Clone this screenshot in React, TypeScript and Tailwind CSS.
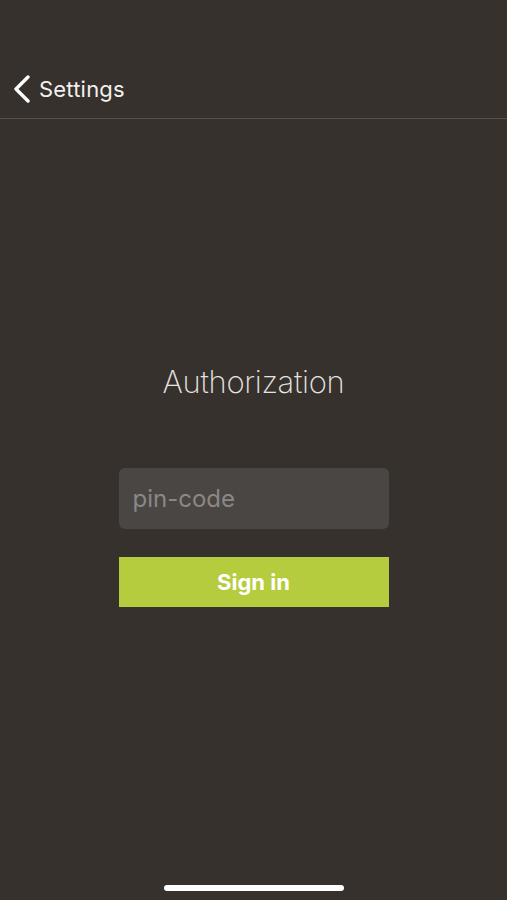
import { useState } from "react";

export default function App() {
    const [pin, setPin] = useState("");

    return (
        <div className="relative w-[507px] h-[900px] bg-[#36312d] flex flex-col" style={{ fontFamily: "Inter, 'Liberation Sans', sans-serif" }}>
            <div className="h-[119px] flex items-end border-b border-[#55504c]">
                <button type="button" className="flex items-center h-[58px] pl-[12px] text-white">
                    <svg width="19" height="28" viewBox="0 0 19 28" fill="none">
                        <path d="M16 2 L4 14 L16 26" stroke="white" strokeWidth="3.4" strokeLinecap="round" strokeLinejoin="round" />
                    </svg>
                    <span className="ml-[8px] text-[22px] leading-none tracking-[0.2px] text-[#f2f0ee]">Settings</span>
                </button>
            </div>

            <div className="flex flex-col items-center">
                <h1 className="mt-[243px] text-[31px] font-extralight leading-[40px] text-[#e6e3e0] tracking-[-0.3px]">Authorization</h1>

                <input
                    type="password"
                    value={pin}
                    onChange={(e) => setPin(e.target.value)}
                    placeholder="pin-code"
                    className="mt-[66px] w-[270px] h-[61px] rounded-[6px] bg-[#4a4643] px-[14px] text-[24px] text-white placeholder:text-[#8b8784] outline-none"
                />

                <button
                    type="button"
                    className="mt-[28px] w-[270px] h-[50px] bg-[#b6cc3f] text-white text-[22px] font-bold"
                >
                    Sign in
                </button>
            </div>

            <div className="absolute bottom-[9px] left-[164px] w-[180px] h-[6px] rounded-full bg-white" />
        </div>
    );
}
